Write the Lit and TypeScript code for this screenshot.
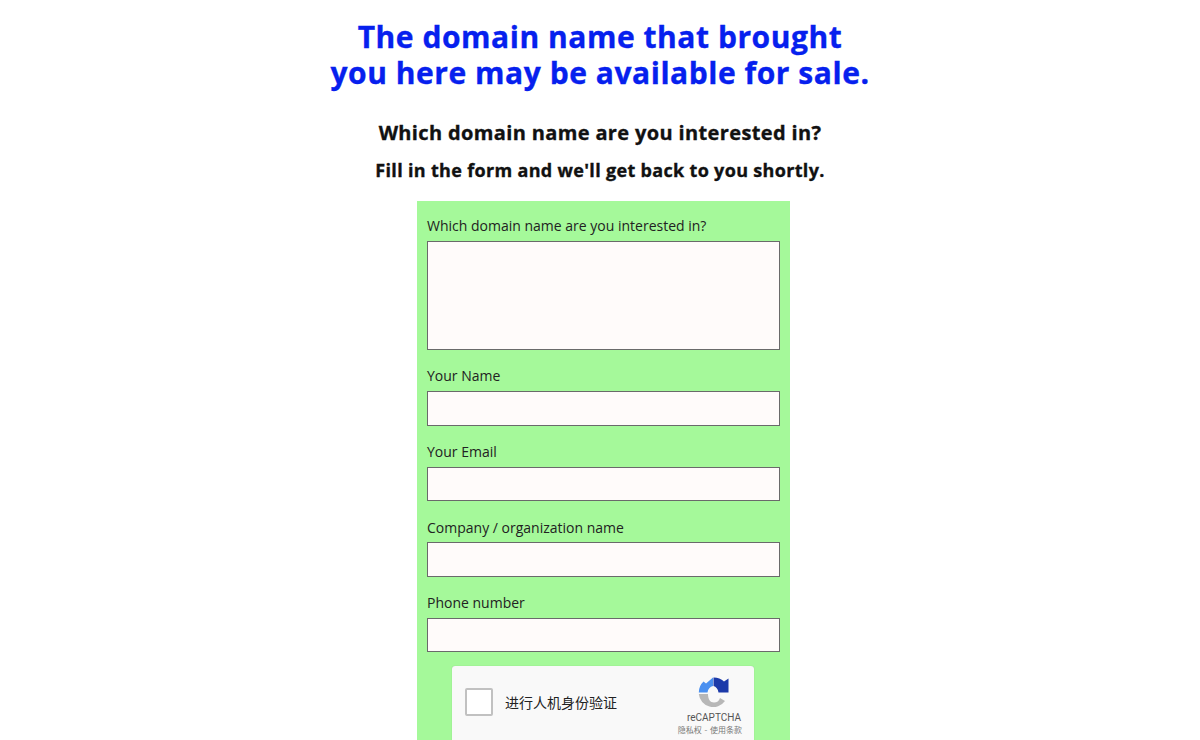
import { LitElement, html, css } from "lit";
import { customElement } from "lit/decorators.js";

@customElement("app-root")
export class AppRoot extends LitElement {
  static styles = css`
    :host { display: block; width: 1200px; height: 740px; overflow: hidden; background: #fff; font-family: "Open Sans", "Noto Sans CJK SC", sans-serif; color: #111; }
    .page { display: flex; flex-direction: column; align-items: center; }
    h1, h2, h3 { font-weight: 700; letter-spacing: 0.018em; text-align: center; -webkit-text-stroke: 0.35px currentColor; }
    h1 { margin: 19px 0 0; font-size: 30px; line-height: 36px; color: #0620ee; }
    h2 { margin: 28px 0 0; font-size: 20px; line-height: 28px; color: #111; }
    h3 { margin: 10px 0 0; font-size: 18px; line-height: 26px; color: #111; }
    form { box-sizing: border-box; width: 373px; margin: 18px 0 0 7px; padding: 15px 10px 20px; background: #a5f99a; display: flex; flex-direction: column; }
    label { display: block; font-size: 14px; line-height: 20px; height: 20px; color: #222; margin-bottom: 5px; }
    .field { margin-bottom: 16.4px; }
    .field label { margin-bottom: 4.7px; }
    .field.last { margin-bottom: 13.3px; }
    .first { margin-bottom: 16.4px; }
    .box { display: block; box-sizing: border-box; width: 353px; height: 34.5px; background: #fffbfa; border: 1px solid #6a6a6a; }
    .area { height: 109px; }
    .captcha { box-sizing: border-box; width: 302px; height: 76px; margin: 0 0 0 25px; background: #f9f9f9; border-radius: 3px; box-shadow: 0 0 1px rgba(0,0,0,.25); display: flex; padding: 0 12px; }
    .check { box-sizing: border-box; width: 28px; height: 28px; background: #fff; border: 2px solid #c1c1c1; border-radius: 2px; margin: 22px 12px 0 1px; }
    .txt { font-size: 14px; line-height: 20px; color: #222; font-family: "Noto Sans CJK SC", sans-serif; margin: 26px 0 0; }
    .brand { margin: 11px 0 0 auto; display: flex; flex-direction: column; align-items: flex-end; }
    .brand svg { width: 32px; height: 32px; display: block; margin-right: 12px; }
    .name { font-family: Roboto, "Liberation Sans", sans-serif; font-size: 10px; line-height: 12px; color: #555; margin: 3px 1px 0 0; }
    .links { font-size: 8px; line-height: 10px; color: #777; margin-top: 1px; white-space: nowrap; font-family: "Noto Sans CJK SC", sans-serif; word-spacing: 1px; }
  `;
  render() {
    const fields = ["Your Name", "Your Email", "Company / organization name"];
    return html`<div class="page">
      <h1>The domain name that brought<br />you here may be available for sale.</h1>
      <h2>Which domain name are you interested in?</h2>
      <h3>Fill in the form and we'll get back to you shortly.</h3>
      <form>
        <div class="first">
          <label>Which domain name are you interested in?</label>
          <div class="box area"></div>
        </div>
        ${fields.map((f) => html`<div class="field"><label>${f}</label><div class="box"></div></div>`)}
        <div class="field last"><label>Phone number</label><div class="box"></div></div>
        <div class="captcha">
          <div class="check"></div>
          <div class="txt">进行人机身份验证</div>
          <div class="brand">
            <svg viewBox="0 0 32 32">
              <path fill="#1c3aa9" d="M15.5 .5A15 15 0 0 1 26 4.5L30.5 1.5V15.5H20.5C20 12 18 9.5 15.5 9Z"/>
              <path fill="#4a90f0" d="M15 .5V9C12 9.5 10 12 9.5 15.5H.8A15 15 0 0 1 5.5 4.5L8 6.5Z"/>
              <path fill="#b7b7b7" d="M.8 17H10C10 22 12 25.5 16 25.5C19 25.5 21 24 22 21L27 24A14.5 14.5 0 0 1 .8 17Z"/>
            </svg>
            <div class="name">reCAPTCHA</div>
            <div class="links">隐私权 - 使用条款</div>
          </div>
        </div>
      </form>
    </div>`;
  }
}
